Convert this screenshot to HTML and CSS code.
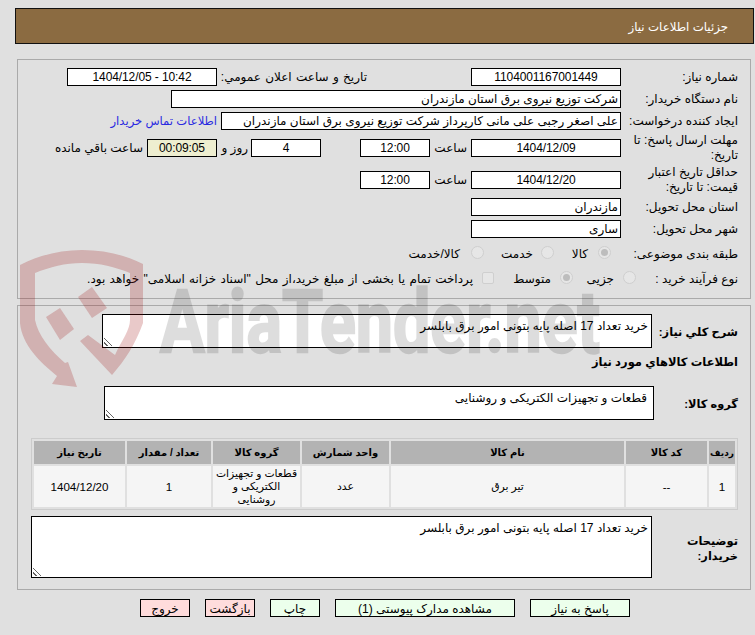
FILE: index.html
```html
<!DOCTYPE html>
<html lang="fa" dir="rtl">
<head>
<meta charset="utf-8">
<title>جزئیات اطلاعات نیاز</title>
<link rel="stylesheet" href="styles.css">
</head>
<body>
<main class="page">
  <header class="title-bar"><h1>جزئیات اطلاعات نیاز</h1></header>

  <section class="panel form-panel">
    <div class="row">
      <label class="lbl">شماره نیاز:</label>
      <output class="box w150 center">1104001167001449</output>
      <label class="lbl-mid">تاریخ و ساعت اعلان عمومي:</label>
      <output class="box w150 center">10:42 - 1404/12/05</output>
    </div>
    <div class="row">
      <label class="lbl">نام دستگاه خریدار:</label>
      <output class="box w450">شرکت توزیع نیروی برق استان مازندران</output>
    </div>
    <div class="row">
      <label class="lbl">ایجاد کننده درخواست:</label>
      <output class="box w400">علی اصغر رجبی علی مانی کارپرداز شرکت توزیع نیروی برق استان مازندران</output>
      <a class="contact" href="#">اطلاعات تماس خریدار</a>
    </div>
    <div class="row tall">
      <label class="lbl">مهلت ارسال پاسخ: تا تاریخ:</label>
      <output class="box w150 center">1404/12/09</output>
      <span class="unit saat">ساعت</span>
      <output class="box w70 center">12:00</output>
      <span class="gap-a"></span>
      <output class="box w70 center">4</output>
      <span class="unit roz">روز و</span>
      <output class="box w70 center timer">00:09:05</output>
      <span class="unit rem">ساعت باقي مانده</span>
    </div>
    <div class="row tall">
      <label class="lbl">حداقل تاریخ اعتبار قیمت: تا تاریخ:</label>
      <output class="box w150 center">1404/12/20</output>
      <span class="unit saat">ساعت</span>
      <output class="box w70 center">12:00</output>
    </div>
    <div class="row">
      <label class="lbl">استان محل تحویل:</label>
      <output class="box w150">مازندران</output>
    </div>
    <div class="row">
      <label class="lbl">شهر محل تحویل:</label>
      <output class="box w150">ساری</output>
    </div>
    <div class="row choice subject">
      <label class="lbl">طبقه بندی موضوعی:</label>
      <span class="mark radio checked"></span><span class="opt o1">کالا</span>
      <span class="mark radio"></span><span class="opt o2">خدمت</span>
      <span class="mark radio"></span><span class="opt o5">کالا/خدمت</span>
    </div>
    <div class="row choice process">
      <label class="lbl">نوع فرآیند خرید :</label>
      <span class="mark radio"></span><span class="opt o3">جزیی</span>
      <span class="mark radio checked"></span><span class="opt o4">متوسط</span>
      <span class="mark check"></span><span class="opt o6">پرداخت تمام یا بخشی از مبلغ خرید،از محل "اسناد خزانه اسلامی" خواهد بود.</span>
    </div>
  </section>

  <section class="panel detail-panel">
    <div class="row need">
      <label class="lbl-b">شرح کلي نیاز:</label>
      <div class="area">خرید تعداد 17 اصله پایه بتونی امور برق بابلسر</div>
    </div>
    <h2>اطلاعات کالاهاي مورد نیاز</h2>
    <div class="row group">
      <label class="lbl-b wide">گروه کالا:</label>
      <div class="area">قطعات و تجهیزات الکتریکی و روشنایی</div>
    </div>
    <table class="items">
      <thead>
        <tr><th class="c1">ردیف</th><th class="c2">کد کالا</th><th class="c3">نام کالا</th><th class="c4">واحد شمارش</th><th class="c5">گروه کالا</th><th class="c6">تعداد / مقدار</th><th class="c7">تاریخ نیاز</th></tr>
      </thead>
      <tbody>
        <tr><td class="num">1</td><td class="num">--</td><td>تیر برق</td><td>عدد</td><td>قطعات و تجهیزات الکتریکی و روشنایی</td><td class="num">1</td><td class="num">1404/12/20</td></tr>
      </tbody>
    </table>
    <div class="row notes">
      <label class="lbl-b wrap">توضیحات خریدار:</label>
      <div class="area notes-area">خرید تعداد 17 اصله پایه بتونی امور برق بابلسر</div>
    </div>
  </section>

  <nav class="actions">
    <button class="btn go b1">پاسخ به نیاز</button>
    <button class="btn go b2">مشاهده مدارک پیوستی (1)</button>
    <button class="btn go">چاپ</button>
    <button class="btn stop">بازگشت</button>
    <button class="btn stop">خروج</button>
  </nav>
</main>
<svg class="watermark" width="755" height="635" viewBox="0 0 755 635" aria-hidden="true">
  <g class="wm-red">
    <path d="M20 265C40 255 60 250 82 250C105 250 125 255 143 264L143 323C135 345 125 360 112 375L80 341L88 335L115 355C122 340 130 330 130 320L130 273C115 267 100 263 82 263C65 263 50 267 35 273L35 320C38 335 50 350 65 363L68 362L77 387L52 384L57 376C40 362 22 345 20 323Z"/>
    <path d="M46 317L60 308L74 329L60 340Z"/>
    <path d="M78 297L92 287L107 308L92 318Z"/>
  </g>
  <text class="wm-text" x="160" y="352" textLength="440" lengthAdjust="spacingAndGlyphs">AriaTender.net</text>
</svg>
</body>
</html>
```
FILE: styles.css
```css
* { box-sizing: border-box; }
html, body { margin: 0; padding: 0; }
body {
  width: 755px; height: 635px; overflow: hidden; position: relative;
  background: #e0e0e0; color: #000;
  font: 12px/14px "Liberation Sans", "DejaVu Sans", sans-serif;
}
.watermark { position: absolute; left: 0; top: 0; pointer-events: none; direction: ltr; }
.wm-red { fill: rgba(155, 10, 10, .22); }
.wm-text {
  font: 700 88px "Roboto", sans-serif; fill: #000; stroke: #000; stroke-width: 2.5px;
  opacity: .13; direction: ltr; unicode-bidi: embed;
}
.page { padding: 8px 1px 0 15px; }
.title-bar {
  height: 36px; background: #8b6b41; border: 1px solid #111;
  padding: 0 25px; display: flex; align-items: center;
}
.title-bar h1 { margin: 2px 0 0; font-size: 11.8px; font-weight: 400; color: #fff; }
.panel { border: 1px solid #aaa; margin: 0 3px 0 2px; padding: 8px 12px 0 0; }
.form-panel { margin-top: 15px; height: 240px; }
.detail-panel { margin-top: 6px; height: 285px; }
.row { display: flex; align-items: center; height: 18px; margin-bottom: 4px; }
.row.tall { height: 28px; }
.lbl { width: 117px; padding-left: 4px; flex: none; line-height: 15px; }
.box {
  display: block; height: 18px; background: #fff; border: 1px solid #000;
  padding: 0 2px; line-height: 16px; white-space: nowrap; overflow: hidden; flex: none;
}
.center { text-align: center; font-size: 12px; letter-spacing: -.1px; }
.w150 { width: 150px; }
.w70 { width: 70px; }
.w450 { width: 450px; }
.w400 { width: 400px; }
.lbl-mid { width: 145px; flex: none; margin: 0 104px 0 5px; white-space: nowrap; word-spacing: 1px; }
.contact { color: #2a2ae0; font-size: 11.6px; text-decoration: none; margin-right: 4px; white-space: nowrap; }
.unit { flex: none; white-space: nowrap; }
.saat { width: 41px; padding-right: 4px; }
.gap-a { width: 39px; flex: none; }
.roz { width: 34px; padding-right: 3px; }
.timer { background: #eeeed0; }
.rem { margin-right: 4px; }
.subject { height: 24px; margin-bottom: 1px; }
.process { height: 24px; }
.mark { flex: none; width: 13px; height: 13px; margin-top: -3px; background: #e6e6e6; border: 1px solid #cfcfcf; }
.radio { border-radius: 50%; position: relative; }
.radio.checked::after { content: ""; position: absolute; inset: 2px; border-radius: 50%; background: #bdbdbd; }
.check { width: 12px; height: 12px; border-radius: 2px; }
.subject .mark:first-of-type { margin-right: 10px; }
.process .mark:first-of-type { margin-right: -15px; }
.opt { flex: none; white-space: nowrap; }
.o1 { width: 44px; padding-right: 10px; }
.o2 { width: 57px; padding-right: 8px; }
.o5 { padding-right: 11px; }
.o3 { width: 50px; padding-right: 9px; }
.o4 { width: 66px; padding-right: 9px; }
.o6 { padding-right: 9px; word-spacing: 1px; }
.lbl-b { width: 86px; flex: none; padding-top: 2px; font-size: 11.4px; font-weight: 700; white-space: nowrap; line-height: 15px; }
.lbl-b.wide { width: 84px; }
.lbl-b.wrap { width: 86px; white-space: normal; padding: 3px 0 0 36px; }
.area {
  position: relative; flex: none; width: 550px; height: 34px;
  background: #fff; border: 1px solid #000; padding: 4px 3px; white-space: nowrap;
}
.group .area { padding-right: 6px; }
.area::after {
  content: ""; position: absolute; left: 1px; bottom: 1px; width: 9px; height: 9px;
  background: repeating-linear-gradient(45deg, transparent 0 2px, #666 2px 3px);
  clip-path: polygon(0 0, 100% 100%, 0 100%);
}
.need { height: 34px; margin-bottom: 0; }
h2 { margin: 6px 0 0; font-size: 11.5px; line-height: 16px; font-weight: 700; }
.group { height: 34px; margin: 16px 0 18px; }
.items {
  width: 707px; border: 1px solid #ccc; border-collapse: separate; border-spacing: 2px;
  table-layout: fixed;
}
.items th { background: #b3b3b3; height: 23px; font-size: 10px; padding: 0; font-weight: 700; }
.items th.c1 { font-size: 9px; }
.items td { background: #f5f5f5; height: 41px; font-size: 10.8px; line-height: 13px; padding: 0 2px; text-align: center; }
.items td.num { font-size: 11.6px; }
.c1 { width: 26px; } .c2 { width: 81px; } .c3 { width: 233px; } .c4 { width: 87px; } .c5 { width: 87px; } .c6 { width: 84px; } .c7 { width: 91px; }
.notes { height: 62px; margin: 6px 0 0; }
.notes-area { width: 621px; height: 62px; }
.actions { display: flex; gap: 15px; margin: 9px 124px 0 0; }
.btn {
  height: 18px; width: 50px; border: 1px solid #000; padding: 2px 0 0; margin: 0; flex: none;
  font: 12px/14px "Liberation Sans", "DejaVu Sans", sans-serif; color: #000; background: #ecffec;
}
.btn.b1 { width: 100px; }
.btn.b2 { width: 180px; }
.btn.stop { background: #ffdcdc; }
```
